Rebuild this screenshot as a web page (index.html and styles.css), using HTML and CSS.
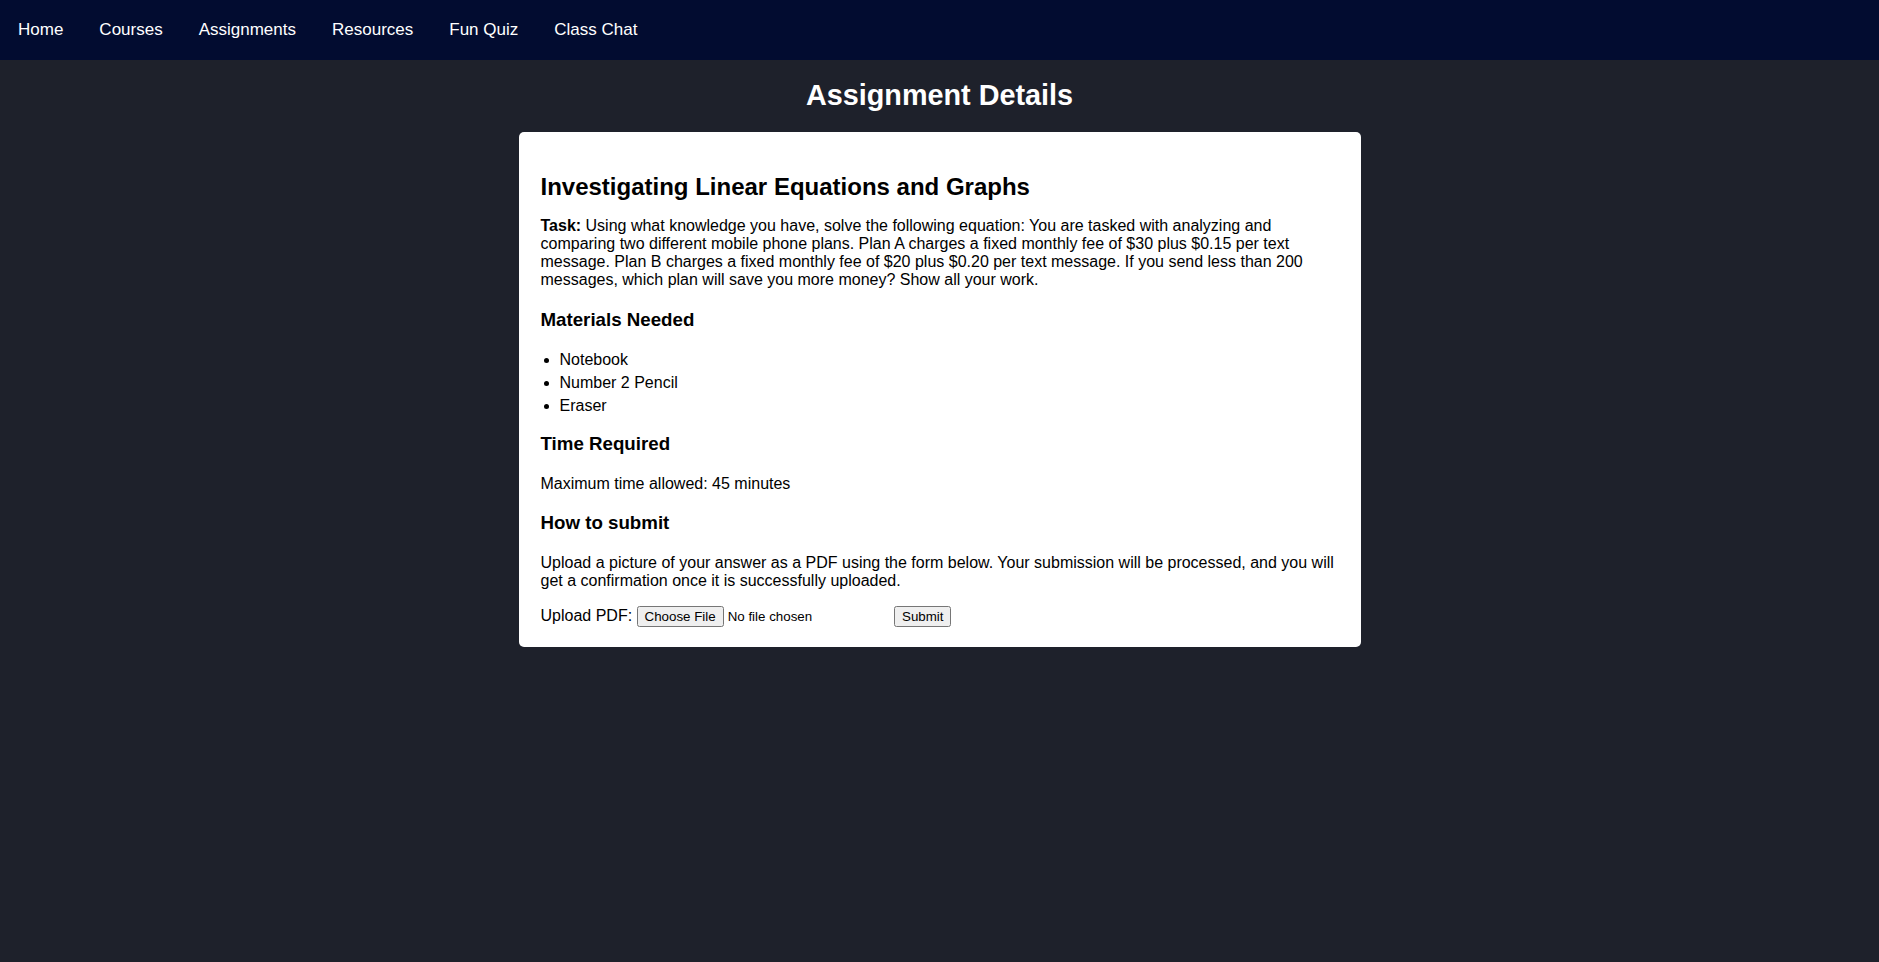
FILE: index.html
```html
<!DOCTYPE html>
<html lang="en">
<head>
    <meta charset="UTF-8">
    <meta name="viewport" content="width=device-width, initial-scale=1.0">
    <title>Assignment Details</title>
    <link rel="stylesheet" href="styles.css">
</head>
<body>
    <nav class="topnav">
        <a href="#">Home</a>
        <a href="#">Courses</a>
        <a href="#">Assignments</a>
        <a href="#">Resources</a>
        <a href="#">Fun Quiz</a>
        <a href="#">Class Chat</a>
    </nav>

    <h1 class="page_title">Assignment Details</h1>

    <div class="assignment_card">
        <h2>Investigating Linear Equations and Graphs</h2>
        <p class="task"><strong>Task:</strong> Using what knowledge you have, solve the following equation: You are tasked with analyzing and comparing two different mobile phone plans. Plan A charges a fixed monthly fee of $30 plus $0.15 per text message. Plan B charges a fixed monthly fee of $20 plus $0.20 per text message. If you send less than 200 messages, which plan will save you more money? Show all your work.</p>

        <h3>Materials Needed</h3>
        <ul>
            <li>Notebook</li>
            <li>Number 2 Pencil</li>
            <li>Eraser</li>
        </ul>

        <h3>Time Required</h3>
        <p>Maximum time allowed: 45 minutes</p>

        <h3>How to submit</h3>
        <p>Upload a picture of your answer as a PDF using the form below. Your submission will be processed, and you will get a confirmation once it is successfully uploaded.</p>

        <form class="upload_form">
            <label for="pdf">Upload PDF:</label>
            <input type="file" id="pdf" accept="application/pdf">
            <button type="submit">Submit</button>
        </form>
    </div>
</body>
</html>
```

FILE: styles.css
```css
body{
    margin:0;
    background:#1e212b;
    font-family:"Liberation Sans", Arial, sans-serif;
}

.topnav{
    height:60px;
    background:#020c30;
    display:flex;
    align-items:center;
}

.topnav a{
    color:#fff;
    text-decoration:none;
    font-size:17px;
    padding:0 18px;
}

.page_title{
    color:#fff;
    text-align:center;
    font-size:1.8em;
}

.assignment_card{
    width:798px;
    margin:0 auto;
    padding:20px 22px;
    background:#fff;
    border-radius:5px;
    color:#000;
}

.assignment_card h2{
    margin:21px 0 16px;
}

.assignment_card h3{
    margin-bottom:20px;
}

.task{
    margin-top:0;
    margin-bottom:20px;
}

.assignment_card ul{
    padding-left:19px;
}

.assignment_card li{
    margin-bottom:5px;
}

.upload_form{
    margin:0;
}
```
